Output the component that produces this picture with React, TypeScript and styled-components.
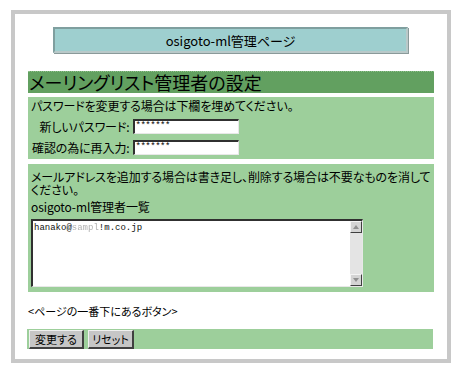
import React from 'react';
import styled, { createGlobalStyle } from 'styled-components';

const GlobalStyle = createGlobalStyle`
	html, body {
		margin: 0;
		padding: 0;
		background: #ffffff;
	}
	body {
		font-family: "Noto Sans CJK JP", "Liberation Sans", sans-serif;
		font-feature-settings: "palt";
		color: #000000;
	}
`;

const Frame = styled.div`
	box-sizing: border-box;
	width: 440px;
	height: 353px;
	margin: 10px 0 0 11px;
	border: 4px solid #c8c8c8;
	padding: 13px 13px 0;
	display: flex;
	flex-direction: column;
`;

const TitleBox = styled.div`
	box-sizing: border-box;
	height: 26px;
	margin: 0 26px 0 25px;
	background: #9ecfcf;
	border-top: 2px solid #7f9f9f;
	border-left: 2px solid #7f9f9f;
	border-bottom: 2px solid #b9c9c9;
	border-right: 2px solid #b9c9c9;
	box-shadow: 1px 1px 0 #8a9a9a;
	display: flex;
	align-items: center;
	justify-content: center;
	font-size: 13px;
`;

const Heading = styled.h1`
	margin: 18px 0 0;
	height: 22px;
	background: #62a060;
	border-top: 1px dotted #8cc08a;
	box-sizing: border-box;
	padding-left: 1px;
	font-size: 18px;
	font-weight: normal;
	line-height: 21px;
	white-space: nowrap;
`;

const Section = styled.div<{ $height: number; $gap: number }>`
	box-sizing: border-box;
	margin-top: ${(p) => p.$gap}px;
	height: ${(p) => p.$height}px;
	background: #9dcf9b;
	padding: 2px 1px 0 3px;
	font-size: 12px;
	line-height: 14px;
	letter-spacing: -0.1px;
`;

const Line = styled.div<{ $top?: number; $lh?: number }>`
	margin-top: ${(p) => p.$top ?? 0}px;
	line-height: ${(p) => p.$lh ?? 14}px;
`;

const FieldGrid = styled.div`
	display: grid;
	grid-template-columns: auto 106px;
	column-gap: 3px;
	row-gap: 6px;
	margin-top: 6px;
	padding-left: 1px;
	align-items: center;
	justify-content: start;
`;

const Label = styled.span`
	text-align: right;
	white-space: nowrap;
`;

const PasswordBox = styled.div`
	box-sizing: border-box;
	height: 15px;
	background: #ffffff;
	border-top: 2px solid #303030;
	border-left: 2px solid #303030;
	border-bottom: 1px solid #e8e8e8;
	border-right: 1px solid #e8e8e8;
	font-family: "Liberation Mono", monospace;
	font-size: 9px;
	line-height: 11px;
	padding-left: 1px;
	letter-spacing: -0.5px;
`;

const TextArea = styled.div`
	box-sizing: border-box;
	margin-top: 5px;
	width: 332px;
	height: 68px;
	background: #ffffff;
	border-top: 2px solid #303030;
	border-left: 2px solid #303030;
	border-bottom: 1px solid #e8e8e8;
	border-right: 1px solid #e8e8e8;
	display: flex;
`;

const AreaText = styled.div`
	flex: 1;
	font-family: "Liberation Mono", monospace;
	font-size: 9px;
	line-height: 12px;
	letter-spacing: 0;
	padding: 1px 0 0 1px;
	color: #111111;
`;

const Masked = styled.span`
	color: #b0b0b0;
	filter: blur(0.6px);
`;

const ScrollBar = styled.div`
	width: 12px;
	background: #e4e4e4;
	display: flex;
	flex-direction: column;
	justify-content: space-between;
`;

const ScrollButton = styled.div`
	box-sizing: border-box;
	width: 12px;
	height: 12px;
	background: #d4d4d4;
	border-top: 1px solid #f4f4f4;
	border-left: 1px solid #f4f4f4;
	border-bottom: 1px solid #404040;
	border-right: 1px solid #404040;
	display: flex;
	align-items: center;
	justify-content: center;
`;

const Note = styled.div`
	margin-top: 12px;
	font-size: 11px;
	line-height: 14px;
`;

const ButtonBar = styled.div`
	margin-top: 11px;
	height: 20px;
	margin-left: -1px;
	margin-right: 1px;
	background: #9dcf9b;
	display: flex;
	gap: 4px;
	padding: 1px 2px 0;
	box-sizing: border-box;
`;

const Button = styled.button<{ $width: number }>`
	box-sizing: border-box;
	width: ${(p) => p.$width}px;
	height: 19px;
	padding: 0;
	background: #c6c6c6;
	border-top: 1px solid #f0f0f0;
	border-left: 1px solid #f0f0f0;
	border-bottom: 2px solid #404040;
	border-right: 2px solid #404040;
	font-family: "Noto Sans CJK JP", sans-serif;
	font-feature-settings: "palt";
	font-size: 11px;
	line-height: 14px;
	color: #000000;
`;

const Arrow = ({ up }: { up: boolean }) => (
	<svg width="6" height="4" viewBox="0 0 6 4">
		<path d={up ? 'M0 4 L3 0 L6 4 Z' : 'M0 0 L3 4 L6 0 Z'} fill="#909090" />
	</svg>
);

const App = () => {
	return (
		<>
			<GlobalStyle />
			<Frame>
				<TitleBox>osigoto-ml管理ページ</TitleBox>
				<Heading>メーリングリスト管理者の設定</Heading>
				<Section $height={62} $gap={4}>
					<Line>パスワードを変更する場合は下欄を埋めてください。</Line>
					<FieldGrid>
						<Label>新しいパスワード:</Label>
						<PasswordBox>*******</PasswordBox>
						<Label>確認の為に再入力:</Label>
						<PasswordBox>*******</PasswordBox>
					</FieldGrid>
				</Section>
				<Section $height={128} $gap={5}>
					<Line $top={4} $lh={13}>
						メールアドレスを追加する場合は書き足し、削除する場合は不要なものを消してください。
					</Line>
					<Line $top={4}>osigoto-ml管理者一覧</Line>
					<TextArea>
						<AreaText>
							hanako@<Masked>sampl</Masked>!m.co.jp
						</AreaText>
						<ScrollBar>
							<ScrollButton>
								<Arrow up />
							</ScrollButton>
							<ScrollButton>
								<Arrow up={false} />
							</ScrollButton>
						</ScrollBar>
					</TextArea>
				</Section>
				<Note>&lt;ページの一番下にあるボタン&gt;</Note>
				<ButtonBar>
					<Button $width={55}>変更する</Button>
					<Button $width={46}>リセット</Button>
				</ButtonBar>
			</Frame>
		</>
	);
};

export default App;
